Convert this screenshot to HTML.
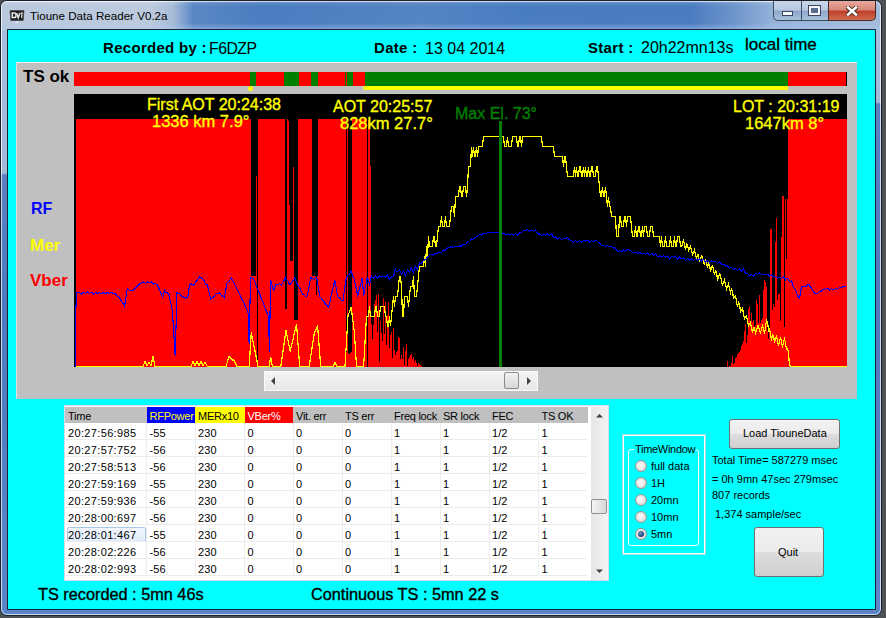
<!DOCTYPE html>
<html><head><meta charset="utf-8">
<style>
*{margin:0;padding:0;box-sizing:border-box}
html,body{width:886px;height:618px;overflow:hidden;background:#4e5254;font-family:"Liberation Sans",sans-serif}
.abs{position:absolute}
.t{position:absolute;white-space:nowrap;line-height:1}
.sb{-webkit-text-stroke:0.35px currentColor}
#win{position:absolute;left:0;top:0;width:882px;height:616px;border-radius:7px;background:#5a84c6;border:1px solid #1a2028;overflow:hidden}
#win .inl{position:absolute;left:0;top:0;right:0;bottom:0;border-radius:6px;border:1px solid rgba(255,255,255,.7)}
#tbar{position:absolute;left:0;top:0;width:880px;height:29px;background:linear-gradient(180deg,rgba(255,255,255,.18) 0,rgba(255,255,255,0) 5px,rgba(255,255,255,0) 22px,rgba(170,200,240,.45) 28px),linear-gradient(90deg,#b9c8dd 0%,#bccade 150px,#a8bcd8 172px,#5a88c6 192px,#4c7cc0 260px,#5584c4 420px,#4a7cc2 520px,#4b7bc0 690px,#6e96cc 735px,#98b4da 775px,#a4bcdc 880px)}
#fl{position:absolute;left:0;top:29px;width:8px;height:590px;background:linear-gradient(180deg,#a8bcdc 0,#a4b8d8 143px,#5a80c2 145px,#4f78c0 280px,#5a86c8 590px)}
#fr{position:absolute;left:874px;top:29px;width:8px;height:590px;background:linear-gradient(180deg,#a8bcdc 0,#a4b8d8 72px,#5a80c2 74px,#4f78c0 280px,#5a86c8 590px)}
#client{position:absolute;left:7px;top:29px;width:869px;height:581px;background:#00ffff;border:1px solid #1a2636}
.btns{position:absolute;top:0;height:20px;border:1px solid #39485c;border-top:none}
.hdr b{font-weight:bold}
.tbl td{}
</style></head><body>
<div id="win">
  <div id="fl"></div><div id="fr"></div>
  <div id="tbar"></div>
  <div class="inl"></div>
  <!-- caption buttons -->
  <div class="abs" style="left:772px;top:0;width:29px;height:20px;border:1px solid #3a4a60;border-top:none;border-radius:0 0 0 5px;background:linear-gradient(180deg,#c9d6e8 0%,#b7c8e0 45%,#8fa9cc 55%,#a9bfdc 100%)"></div>
  <div class="abs" style="left:800px;top:0;width:28px;height:20px;border:1px solid #3a4a60;border-top:none;background:linear-gradient(180deg,#c9d6e8 0%,#b7c8e0 45%,#8fa9cc 55%,#a9bfdc 100%)"></div>
  <div class="abs" style="left:827px;top:0;width:48px;height:20px;border:1px solid #4a2a28;border-top:none;border-radius:0 0 5px 0;background:linear-gradient(180deg,#e8a89c 0%,#d88a7a 45%,#c0402a 55%,#d06a50 100%)"></div>
  <!-- minimize glyph -->
  <div class="abs" style="left:781px;top:10px;width:11px;height:5px;background:#f4f6fa;border:1px solid #3a4660"></div>
  <!-- maximize glyph -->
  <div class="abs" style="left:808px;top:5px;width:11px;height:9px;border:2px solid #f4f6fa;outline:1px solid #3a4660;background:#5a6e92"></div>
  <!-- close glyph -->
  <svg class="abs" style="left:845px;top:5px" width="12" height="10" viewBox="0 0 12 10"><path d="M2 1.5 L10 8.5 M10 1.5 L2 8.5" stroke="#4a2a24" stroke-width="4.4" stroke-linecap="square"/><path d="M2 1.5 L10 8.5 M10 1.5 L2 8.5" stroke="#fff" stroke-width="2.6" stroke-linecap="square"/></svg>
  <!-- app icon -->
  <svg class="abs" style="left:8px;top:8px" width="16" height="16" viewBox="0 0 16 16"><path d="M1 1.5 L15 1.5 L14.2 11.5 L1.8 11.5 Z" fill="#1c1c1c" stroke="#3a3a3a" stroke-width="0.6"/><path d="M3.3 4 H5.6 Q7 4 7 6.2 Q7 8.6 5.6 8.6 H3.3 Z" fill="none" stroke="#e8e8e8" stroke-width="1.5"/><path d="M7.6 4 L9.2 8.8 L11 4" fill="none" stroke="#e0e8e0" stroke-width="1.5"/><path d="M11.8 4 L13 4 L12.6 9" fill="none" stroke="#d8d8d8" stroke-width="1.3"/><rect x="6.5" y="12.5" width="3" height="1.3" fill="#e8eef8"/></svg>
  <div class="t" style="left:29px;top:9px;font-size:11.6px;color:#000">Tioune Data Reader V0.2a</div>
</div>
<div id="client"></div>

<!-- header -->
<div class="t" style="left:103px;top:40px;font-size:15px;letter-spacing:0.3px;font-weight:bold;color:#000">Recorded by :</div>
<div class="t" style="left:209px;top:41px;font-size:15.8px;letter-spacing:-0.5px;color:#000">F6DZP</div>
<div class="t" style="left:374px;top:40px;font-size:15px;letter-spacing:0.3px;font-weight:bold;color:#000">Date :</div>
<div class="t" style="left:425px;top:41px;font-size:16px;color:#000">13 04 2014</div>
<div class="t" style="left:588px;top:40px;font-size:15px;letter-spacing:0.3px;font-weight:bold;color:#000">Start :</div>
<div class="t" style="left:641px;top:40px;font-size:16px;color:#000">20h22mn13s</div>
<div class="t sb" style="left:745px;top:36px;font-size:17px;color:#000">local time</div>

<!-- gray panel -->
<div class="abs" style="left:16px;top:62px;width:841px;height:337px;background:#c0c0c0;border-top:1px solid #f0f0f0;border-left:1px solid #e0e0e0"></div>
<div class="t" style="left:23px;top:68px;font-size:17px;font-weight:bold;color:#000">TS ok</div>

<!-- TS bar -->
<div class="abs" style="left:74px;top:72px;width:773px;height:14px;background:#f00;border-right:1px solid #000"></div>
<div class="abs" style="left:250px;top:72px;width:6px;height:14px;background:#008000"></div>
<div class="abs" style="left:284px;top:72px;width:15px;height:14px;background:#008000"></div>
<div class="abs" style="left:311px;top:72px;width:7px;height:14px;background:#008000"></div>
<div class="abs" style="left:345px;top:72px;width:1px;height:14px;background:#008000"></div>
<div class="abs" style="left:347px;top:72px;width:6px;height:14px;background:#008000"></div>
<div class="abs" style="left:365px;top:72px;width:423px;height:14px;background:#008000"></div>
<div class="abs" style="left:363px;top:86px;width:425px;height:4px;background:#ff0;border-radius:2px 0 0 2px"></div>
<div class="abs" style="left:248px;top:86px;width:5px;height:5px;background:#ff0;border-radius:50%"></div>

<svg class="abs" style="left:74px;top:94px" width="773" height="273" viewBox="74 94 773 273">
<rect x="74" y="94" width="773" height="273" fill="#000"/>
<path d="M76 119.0H251V367H76ZM251 276.0H256V367H251ZM256 176.0H257V367H256ZM258 119.0H285V367H258ZM285 309.0H287V367H285ZM287 119.0H288V367H287ZM288 121.0H289V367H288ZM289 205.0H290V367H289ZM290 261.0H293V367H290ZM293 167.0H294V367H293ZM294 320.0H298V367H294ZM298 119.0H312V367H298ZM312 276.0H316V367H312ZM316 295.0H317V367H316ZM317 276.0H318V367H317ZM318 119.0H346V367H318ZM346 352.0H347V367H346ZM347 125.0H348V367H347ZM348 353.0H349V367H348ZM349 354.0H350V367H349ZM350 353.0H351V367H350ZM351 352.0H352V367H351ZM352 119.0H367V367H352ZM368 120.0H370V367H368ZM370 166.0H371V367H370ZM371 324.2H372V367H371ZM372 338.6H373V367H372ZM373 325.4H374V367H373ZM374 303.6H375V367H374ZM375 300.3H376V367H375ZM376 295.4H377V367H376ZM377 331.8H378V367H377ZM378 294.2H379V367H378ZM379 361.6H380V367H379ZM380 320.5H381V367H380ZM381 332.6H382V367H381ZM382 340.8H383V367H382ZM383 297.6H384V367H383ZM384 334.2H385V367H384ZM385 302.0H386V367H385ZM386 344.5H387V367H386ZM387 315.2H388V367H387ZM388 302.2H389V367H388ZM389 348.1H390V367H389ZM390 335.0H391V367H390ZM391 331.7H392V367H391ZM392 358.3H393V367H392ZM393 328.0H394V367H393ZM394 350.0H395V367H394ZM395 354.8H396V367H395ZM396 352.3H397V367H396ZM397 350.6H398V367H397ZM398 336.9H399V367H398ZM399 338.0H400V367H399ZM400 359.0H401V367H400ZM401 355.2H402V367H401ZM402 359.3H403V367H402ZM403 346.6H404V367H403ZM404 364.5H405V367H404ZM405 351.0H406V367H405ZM406 344.2H407V367H406ZM407 365.7H408V367H407ZM408 359.2H409V367H408ZM409 357.4H410V367H409ZM410 354.8H411V367H410ZM411 353.7H412V367H411ZM412 358.6H413V367H412ZM413 356.5H414V367H413ZM414 362.0H415V367H414ZM415 359.7H416V367H415ZM416 363.0H417V367H416ZM417 366.1H418V367H417ZM418 362.6H419V367H418ZM419 364.3H420V367H419ZM420 365.3H421V367H420ZM421 366.4H422V367H421ZM727 361.3H728V367H727ZM729 365.5H730V367H729ZM730 365.7H731V367H730ZM731 363.0H732V367H731ZM732 356.3H733V367H732ZM733 363.7H734V367H733ZM734 363.3H735V367H734ZM735 358.0H736V367H735ZM736 357.0H737V367H736ZM737 354.4H738V367H737ZM738 353.1H739V367H738ZM739 351.5H740V367H739ZM740 350.2H741V367H740ZM741 345.8H742V367H741ZM742 343.5H743V367H742ZM743 341.1H744V367H743ZM744 331.2H745V367H744ZM745 324.4H746V367H745ZM746 342.6H747V367H746ZM747 334.5H748V367H747ZM748 308.6H749V367H748ZM749 305.6H750V367H749ZM750 324.7H751V367H750ZM751 312.7H752V367H751ZM752 322.3H753V367H752ZM753 319.9H754V367H753ZM754 329.2H755V367H754ZM755 325.0H756V367H755ZM756 299.8H757V367H756ZM757 304.1H758V367H757ZM758 322.6H759V367H758ZM759 294.9H760V367H759ZM760 322.8H761V367H760ZM761 319.9H762V367H761ZM762 318.1H763V367H762ZM763 290.4H764V367H763ZM764 280.3H765V367H764ZM765 282.2H766V367H765ZM766 287.2H767V367H766ZM767 331.0H768V367H767ZM768 339.3H769V367H768ZM769 328.3H770V367H769ZM770 229.0H772V367H770ZM772 309.9H773V367H772ZM773 304.3H774V367H773ZM774 306.8H775V367H774ZM775 241.5H776V367H775ZM776 218.0H777V367H776ZM777 300.3H778V367H777ZM778 294.0H780V367H778ZM780 321.1H781V367H780ZM781 237.3H782V367H781ZM782 196.0H784V367H782ZM784 326.7H785V367H784ZM785 199.0H786V367H785ZM786 259.0H787V367H786ZM787 199.0H788V367H787ZM788 119.0H847V367H788Z" fill="#f00" shape-rendering="crispEdges"/>
<polyline points="76.0,366.4 143.0,366.4 145.0,361.5 147.0,366.0 149.0,362.0 151.0,366.0 153.0,356.2 155.0,366.4 191.0,366.4 193.0,361.5 195.0,366.0 197.0,361.5 199.0,366.0 201.0,361.5 203.0,366.0 205.0,362.0 207.3,366.4 226.0,366.4 229.0,356.2 232.0,360.0 234.0,360.0 236.7,366.4 249.2,366.4 251.3,332.5 257.6,364.0 258.0,366.4 269.2,366.4 270.7,356.7 272.3,366.4 280.8,366.4 286.0,330.4 290.2,351.5 296.5,324.0 299.7,366.4 309.2,366.4 314.4,332.5 317.6,326.2 320.7,366.4 333.3,366.4 335.0,362.0 336.7,366.4 345.0,366.4 348.0,315.7 351.2,307.3 354.4,332.5 356.5,366.4 363.6,366.4 366.5,316.4 367.5,316.4 368.5,316.4 369.5,306.5 370.5,316.4 371.5,316.4 372.5,316.4 373.5,316.4 374.5,316.4 375.5,306.5 376.5,306.5 377.5,316.4 378.5,316.4 379.5,316.4 380.5,306.5 381.5,306.5 382.5,306.5 383.5,306.5 384.5,306.5 385.5,316.4 386.5,316.4 387.5,326.4 388.5,326.4 389.5,316.4 390.5,326.4 391.5,316.4 392.5,306.5 393.5,296.5 394.5,306.5 395.5,296.5 396.5,296.5 397.5,296.5 398.5,286.5 399.5,276.5 400.5,276.5 401.5,286.5 402.5,316.4 403.5,316.4 404.5,296.5 405.5,296.5 406.5,296.5 407.5,296.5 408.5,306.5 409.5,296.5 410.5,286.5 411.5,286.5 412.5,286.5 413.5,276.5 414.5,296.5 415.5,296.5 416.5,296.5 417.5,286.5 418.5,276.5 419.5,266.5 420.5,266.5 421.5,266.5 422.5,266.5 423.5,266.5 424.5,256.5 425.5,266.5 426.5,246.5 427.5,256.5 428.5,236.5 429.5,246.5 430.5,246.5 431.5,246.5 432.5,246.5 433.5,236.5 434.5,236.5 435.5,246.5 436.5,246.5 437.5,236.5 438.5,226.5 439.5,226.5 440.5,226.5 441.5,216.5 442.5,226.5 443.5,226.5 444.5,226.5 445.5,216.5 446.5,226.5 447.5,226.5 448.5,226.5 449.5,226.5 450.5,216.5 451.5,206.6 452.5,206.6 453.5,206.6 454.5,216.5 455.5,196.6 456.5,196.6 457.5,196.6 458.5,196.6 459.5,186.6 460.5,186.6 461.5,196.6 462.5,196.6 463.5,186.6 464.5,186.6 465.5,186.6 466.5,196.6 467.5,186.6 468.5,166.6 469.5,166.6 470.5,166.6 471.5,146.6 472.5,156.6 473.5,146.6 474.5,156.6 475.5,156.6 476.5,146.6 477.5,156.6 478.5,146.6 479.5,146.6 480.5,146.6 481.5,146.6 482.5,146.6 483.5,136.6 484.5,136.6 485.5,136.6 486.5,136.6 487.5,136.6 488.5,136.6 489.5,136.6 490.5,136.6 491.5,136.6 492.5,136.6 493.5,136.6 494.5,136.6 495.5,136.6 496.5,136.6 497.5,136.6 498.5,136.6 499.5,136.6 500.5,136.6 501.5,136.6 502.5,136.6 503.5,136.6 504.5,146.6 505.5,146.6 506.5,146.6 507.5,136.6 508.5,146.6 509.5,146.6 510.5,146.6 511.5,146.6 512.5,136.6 513.5,136.6 514.5,136.6 515.5,136.6 516.5,136.6 517.5,146.6 518.5,146.6 519.5,136.6 520.5,136.6 521.5,146.6 522.5,136.6 523.5,136.6 524.5,136.6 525.5,136.6 526.5,136.6 527.5,136.6 528.5,136.6 529.5,136.6 530.5,136.6 531.5,136.6 532.5,136.6 533.5,136.6 534.5,136.6 535.5,136.6 536.5,136.6 537.5,136.6 538.5,136.6 539.5,136.6 540.5,136.6 541.5,136.6 542.5,146.6 543.5,146.6 544.5,146.6 545.5,146.6 546.5,146.6 547.5,146.6 548.5,146.6 549.5,146.6 550.5,146.6 551.5,146.6 552.5,146.6 553.5,146.6 554.5,156.6 555.5,156.6 556.5,156.6 557.5,156.6 558.5,156.6 559.5,156.6 560.5,156.6 561.5,156.6 562.5,156.6 563.5,166.6 564.5,156.6 565.5,156.6 566.5,166.6 567.5,176.6 568.5,176.6 569.5,176.6 570.5,176.6 571.5,176.6 572.5,176.6 573.5,176.6 574.5,166.6 575.5,176.6 576.5,166.6 577.5,176.6 578.5,176.6 579.5,166.6 580.5,166.6 581.5,176.6 582.5,176.6 583.5,166.6 584.5,176.6 585.5,166.6 586.5,176.6 587.5,176.6 588.5,166.6 589.5,176.6 590.5,176.6 591.5,166.6 592.5,166.6 593.5,176.6 594.5,176.6 595.5,176.6 596.5,166.6 597.5,166.6 598.5,176.6 599.5,186.6 600.5,196.6 601.5,196.6 602.5,186.6 603.5,196.6 604.5,196.6 605.5,186.6 606.5,196.6 607.5,206.6 608.5,196.6 609.5,206.6 610.5,206.6 611.5,216.5 612.5,216.5 613.5,216.5 614.5,216.5 615.5,216.5 616.5,236.5 617.5,236.5 618.5,236.5 619.5,216.5 620.5,216.5 621.5,226.5 622.5,226.5 623.5,226.5 624.5,216.5 625.5,216.5 626.5,226.5 627.5,216.5 628.5,216.5 629.5,216.5 630.5,216.5 631.5,226.5 632.5,236.5 633.5,236.5 634.5,236.5 635.5,226.5 636.5,236.5 637.5,236.5 638.5,226.5 639.5,226.5 640.5,236.5 641.5,236.5 642.5,226.5 643.5,236.5 644.5,226.5 645.5,226.5 646.5,226.5 647.5,236.5 648.5,236.5 649.5,236.5 650.5,226.5 651.5,226.5 652.5,226.5 653.5,236.5 654.5,236.5 655.5,236.5 656.5,236.5 657.5,236.5 658.5,236.5 659.5,236.5 660.5,246.5 661.5,236.5 662.5,246.5 663.5,246.5 664.5,246.5 665.5,236.5 666.5,246.5 667.5,246.5 668.5,246.5 669.5,246.5 670.5,236.5 671.5,246.5 672.5,246.5 673.5,246.5 674.5,236.5 675.5,246.5 676.5,246.5 677.5,236.5 678.5,236.5 679.5,236.5 680.5,246.5 681.5,246.5 682.5,243.9 683.5,239.4 684.5,245.0 685.5,250.3 686.5,243.7 687.5,244.3 688.5,250.5 689.5,248.4 690.5,246.3 691.5,250.4 692.5,254.9 693.5,252.4 694.5,249.9 695.5,254.4 696.5,258.8 697.5,254.4 698.5,255.2 699.5,261.1 700.5,259.6 701.5,256.0 702.5,256.7 703.5,261.8 704.5,265.2 705.5,260.3 706.5,261.3 707.5,268.2 708.5,263.2 709.5,264.2 710.5,271.8 711.5,268.2 712.5,264.7 713.5,270.2 714.5,274.6 715.5,271.0 716.5,272.3 717.5,279.7 718.5,277.9 719.5,273.6 720.5,274.8 721.5,281.8 722.5,284.9 723.5,282.5 724.5,280.0 725.5,284.5 726.5,289.1 727.5,286.4 728.5,283.7 729.5,288.4 730.5,292.8 731.5,289.5 732.5,291.4 733.5,298.2 734.5,297.0 735.5,295.8 736.5,300.8 737.5,307.3 738.5,302.1 739.5,304.0 740.5,312.1 741.5,310.1 742.5,308.0 743.5,313.7 744.5,318.8 745.5,317.2 746.5,315.7 747.5,320.8 748.5,325.8 749.5,324.3 750.5,322.6 751.5,327.3 752.5,333.3 753.5,327.1 754.5,327.1 755.5,333.5 756.5,330.8 757.5,325.7 758.5,325.7 759.5,330.8 760.5,332.7 761.5,329.5 762.5,326.3 763.5,329.5 764.5,333.8 765.5,327.1 766.5,320.1 767.5,321.8 768.5,330.8 769.5,328.9 770.5,333.2 771.5,340.5 772.5,334.7 773.5,335.4 774.5,342.8 775.5,339.2 776.5,335.5 777.5,340.7 778.5,346.2 779.5,341.5 780.5,336.8 781.5,342.0 782.5,346.1 783.5,342.5 784.5,338.9 785.5,343.0 786.5,349.2 787.5,348.4 788.5,353.3 789.5,364.9 790.5,366.4 791.5,366.4 792.5,366.4 793.5,366.4 794.5,366.4 795.5,366.4 796.5,366.4 797.5,366.4 798.5,366.4 799.5,366.4 800.5,366.4 801.5,366.4 802.5,366.4 803.5,366.4 804.5,366.4 805.5,366.4 806.5,366.4 807.5,366.4 808.5,366.4 809.5,366.4 810.5,366.4 811.5,366.4 812.5,366.4 813.5,366.4 814.5,366.4 815.5,366.4 816.5,366.4 817.5,366.4 818.5,366.4 819.5,366.4 820.5,366.4 821.5,366.4 822.5,366.4 823.5,366.4 824.5,366.4 825.5,366.4 826.5,366.4 827.5,366.4 828.5,366.4 829.5,366.4 830.5,366.4 831.5,366.4 832.5,366.4 833.5,366.4 834.5,366.4 835.5,366.4 836.5,366.4 837.5,366.4 838.5,366.4 839.5,366.4 840.5,366.4 841.5,366.4 842.5,366.4 843.5,366.4 844.5,366.4 845.5,366.4 846.5,366.4" fill="none" stroke="#ff0" stroke-width="1.2" stroke-linejoin="miter" shape-rendering="crispEdges"/>
<polyline points="75.5,367.0 75.5,313.0 77.0,292.5 77.0,292.5 77.5,292.7 79.5,292.5 81.5,294.0 83.5,292.2 85.5,293.4 87.5,292.1 89.5,293.4 91.5,292.2 93.5,294.0 95.5,292.8 97.5,293.3 99.5,292.8 100.0,293.0 101.5,293.3 103.5,292.6 105.5,293.4 107.5,292.7 109.5,293.2 111.5,292.4 113.5,293.5 114.0,293.0 115.5,294.0 117.5,296.9 119.5,297.2 120.0,298.3 121.5,301.6 123.5,303.9 124.5,306.3 125.5,300.5 127.1,289.4 127.5,289.1 129.5,290.5 131.5,290.1 132.5,290.3 133.5,290.1 135.5,287.9 136.0,287.6 137.5,286.3 139.5,284.1 141.5,283.2 142.3,282.3 143.5,282.0 145.5,283.3 147.5,281.9 149.5,282.8 151.2,282.3 151.5,282.1 153.5,284.0 155.5,283.6 157.4,284.9 157.5,285.3 159.5,289.5 161.5,294.9 162.7,297.4 163.5,294.1 164.5,290.3 165.5,292.4 167.5,292.9 169.0,294.7 169.5,297.9 171.5,306.2 172.5,311.6 173.5,329.4 175.2,356.2 175.5,345.2 177.0,292.0 177.5,293.2 179.5,293.5 181.5,296.1 183.5,296.5 184.1,297.4 185.5,298.0 187.5,297.0 187.7,297.4 189.5,285.0 191.5,284.0 193.5,285.0 194.8,283.2 195.5,281.7 197.5,280.4 198.4,277.8 199.5,277.1 201.5,278.2 202.0,277.8 203.5,279.4 205.5,283.9 207.3,285.0 207.5,285.2 209.5,294.1 210.8,299.2 211.5,298.4 213.5,297.1 215.5,294.4 216.2,293.8 217.5,293.8 219.5,293.0 219.7,293.0 221.5,295.7 223.5,296.2 224.2,297.4 225.5,291.8 226.9,283.2 227.5,282.4 229.5,281.0 231.3,277.8 231.5,277.7 233.5,282.4 235.5,285.6 237.5,290.3 239.5,293.6 241.5,298.5 243.5,301.5 244.7,304.5 245.5,307.1 247.5,311.3 248.2,313.4 249.1,343.7 249.5,326.3 250.5,278.0 251.5,277.7 253.5,279.2 253.7,279.0 255.5,283.2 257.5,289.2 259.5,293.3 261.5,298.8 263.5,303.3 265.5,309.6 267.5,313.5 268.4,315.8 269.5,351.6 270.5,280.0 271.5,282.9 273.5,290.5 273.7,290.5 275.5,285.1 275.8,284.2 277.5,284.7 279.5,283.8 281.5,284.9 282.0,284.2 283.5,281.3 285.3,278.0 285.5,279.6 287.5,280.1 289.5,284.4 290.5,284.2 291.5,282.7 293.5,280.1 294.7,278.0 295.5,279.6 297.5,284.7 299.5,287.5 301.5,291.9 303.0,294.7 303.5,294.5 305.5,296.6 307.4,295.8 307.5,294.7 309.5,284.1 310.5,278.0 311.5,277.9 313.5,279.3 315.5,277.6 316.8,278.0 317.5,283.1 319.5,293.8 320.0,296.8 321.5,298.8 323.5,300.7 325.5,304.3 327.5,306.2 328.4,307.4 329.5,303.9 331.5,293.5 333.5,286.3 334.7,280.0 335.5,284.1 337.5,295.9 337.9,296.8 339.5,297.9 341.5,300.5 343.0,300.3 343.5,296.5 345.5,283.6 346.3,277.6 347.5,275.4 349.5,274.2 350.9,270.8 351.5,272.2 353.5,277.9 354.3,279.9 355.5,285.1 357.5,295.2 357.7,295.8 359.5,288.4 361.5,281.2 362.2,277.6 363.5,294.2 363.6,295.6 365.5,286.9 367.1,277.8 367.5,277.8 369.5,284.1 369.8,283.2 371.5,275.4 371.6,277.0 373.5,278.4 375.5,275.7 377.5,277.9 379.5,276.1 381.5,277.1 383.5,276.4 385.5,277.1 387.5,275.2 389.5,279.8 391.5,276.5 392.0,277.0 393.5,276.7 395.5,268.5 395.6,270.7 397.5,271.7 399.5,269.6 401.5,274.3 402.8,272.5 403.5,271.0 405.5,275.6 407.5,269.6 409.5,272.3 411.5,267.3 411.7,268.9 413.5,272.9 415.5,266.1 417.5,270.1 418.8,265.3 419.5,262.9 421.5,263.6 422.4,261.8 423.5,260.5 425.5,259.5 427.5,257.2 429.5,255.6 430.0,255.0 431.5,254.5 433.5,255.0 435.5,253.2 437.5,253.0 439.5,252.1 441.5,252.7 442.6,251.2 443.5,250.0 445.5,250.2 447.5,247.7 448.9,247.0 449.5,247.3 451.5,246.6 453.5,247.3 455.5,246.4 457.5,246.9 459.5,246.0 461.5,246.0 463.5,244.1 465.5,244.9 467.5,242.0 469.5,241.5 471.5,239.2 472.0,239.6 473.5,239.1 475.5,237.2 477.5,236.2 479.5,234.7 480.5,234.4 481.5,234.9 483.5,233.4 485.5,233.7 487.5,232.6 488.9,232.7 489.5,232.7 491.5,232.5 493.5,232.8 495.5,232.4 497.5,232.8 499.5,232.7 501.5,232.7 503.5,233.3 505.5,234.6 505.7,234.4 507.5,233.9 509.5,235.0 511.5,233.7 513.5,235.1 515.5,233.6 517.5,235.3 518.3,234.0 519.5,233.0 521.5,232.6 523.5,230.2 524.7,230.2 525.5,230.4 527.5,229.7 529.5,231.1 531.5,230.2 533.5,231.4 535.2,230.2 535.5,229.9 537.5,233.4 539.4,234.4 539.5,233.9 541.5,235.5 543.5,234.3 545.5,235.1 547.5,234.0 549.5,235.6 551.5,233.8 552.0,234.4 553.5,237.6 554.1,237.2 555.5,237.0 557.5,239.1 559.5,237.7 561.5,239.5 563.4,238.9 563.5,238.7 565.5,238.4 567.5,237.7 567.6,237.8 569.5,239.8 571.5,240.7 571.8,241.0 573.5,242.2 575.5,240.6 577.5,241.9 579.5,240.6 581.5,242.0 583.5,240.7 585.5,241.0 587.5,240.4 589.5,242.0 591.5,240.6 593.5,241.7 595.5,240.5 597.0,241.0 597.5,241.6 599.5,242.9 601.3,245.2 601.5,245.6 603.5,245.5 605.5,246.3 607.5,245.7 609.5,246.9 611.5,246.4 613.5,248.6 613.9,247.3 615.5,248.6 617.5,251.4 618.1,251.5 619.5,250.9 621.5,251.8 623.5,249.9 625.5,250.9 627.5,249.2 628.6,249.4 629.5,250.2 631.5,251.4 632.8,252.5 633.5,252.9 635.5,252.2 637.5,253.4 639.5,252.7 641.5,253.3 643.5,253.4 645.5,254.2 647.5,253.1 649.5,255.5 651.5,253.4 653.5,255.0 655.5,254.0 656.0,254.6 657.5,256.4 659.5,255.8 660.2,256.7 661.5,257.0 663.5,255.7 665.5,257.1 667.5,255.6 669.5,258.8 671.5,256.7 672.8,256.7 673.5,257.8 675.5,256.2 677.5,259.5 679.5,257.2 680.0,257.8 681.5,258.6 683.5,258.0 685.5,260.6 687.5,258.6 688.4,258.9 689.5,260.3 691.5,259.0 693.5,260.5 695.5,258.5 697.5,260.0 699.5,259.0 701.5,261.2 703.5,259.3 705.5,262.0 707.5,260.4 709.5,262.8 711.5,260.5 711.6,261.0 713.5,261.4 715.5,261.7 717.5,263.2 719.5,262.0 720.0,262.6 721.5,264.0 723.5,264.2 725.5,266.1 725.8,265.5 727.5,265.7 729.5,268.5 731.5,267.2 733.5,269.5 735.5,268.4 737.5,270.5 739.5,268.8 741.5,271.2 743.3,269.4 743.5,268.8 745.5,273.6 747.5,273.3 749.1,275.2 749.5,275.9 751.5,274.3 753.5,276.5 755.5,273.3 757.5,274.3 758.8,273.3 759.5,273.0 761.5,274.4 763.5,274.2 765.5,274.8 767.5,274.1 768.5,275.2 769.5,276.0 771.5,274.8 773.5,276.8 775.5,276.4 777.5,278.2 778.2,277.2 779.5,277.1 781.5,278.4 783.5,276.8 785.5,280.0 786.0,278.1 787.5,278.2 789.5,281.8 791.5,280.8 791.8,282.0 793.5,287.7 795.5,289.3 797.5,295.8 799.5,298.5 801.5,286.9 803.5,286.4 805.5,286.9 807.5,285.0 809.3,284.9 809.5,286.3 811.5,287.8 813.5,291.7 815.0,293.6 815.5,293.3 817.5,293.7 819.5,291.3 821.5,291.1 823.5,289.2 824.8,288.8 825.5,289.2 827.5,288.3 829.5,290.2 831.5,288.6 833.5,289.7 835.5,288.6 836.4,288.8 837.5,289.3 839.5,287.6 841.5,287.5 843.5,286.6 845.5,286.4 846.1,285.9" fill="none" stroke="#00f" stroke-width="1.1" shape-rendering="crispEdges"/>
<rect x="499" y="121" width="3" height="246" fill="#008000" shape-rendering="crispEdges"/>
</svg>

<!-- chart labels -->
<div class="t sb" style="left:147px;top:97px;font-size:16px;color:#ff0">First AOT 20:24:38</div>
<div class="t sb" style="left:152px;top:113px;font-size:16.5px;color:#ff0">1336 km 7.9°</div>
<div class="t sb" style="left:333px;top:99px;font-size:16px;color:#ff0">AOT 20:25:57</div>
<div class="t sb" style="left:340px;top:115px;font-size:16.5px;color:#ff0">828km 27.7°</div>
<div class="t sb" style="left:455px;top:106px;font-size:16px;color:#008000">Max El. 73°</div>
<div class="t sb" style="left:733px;top:99px;font-size:16px;color:#ff0">LOT : 20:31:19</div>
<div class="t sb" style="left:745px;top:115px;font-size:16.5px;color:#ff0">1647km 8°</div>

<div class="t" style="left:31px;top:201px;font-size:16px;font-weight:bold;color:#00f">RF</div>
<div class="t" style="left:30px;top:237px;font-size:17px;font-weight:bold;color:#ff0">Mer</div>
<div class="t" style="left:30px;top:272px;font-size:17px;font-weight:bold;color:#f00">Vber</div>

<!-- h scrollbar -->
<div class="abs" style="left:264px;top:371px;width:274px;height:20px;background:linear-gradient(180deg,#f4f4f4,#e8e8e8);border:1px solid #fafafa"></div>
<svg class="abs" style="left:268px;top:376px" width="10" height="10"><path d="M7 1 L3 5 L7 9 Z" fill="#444"/></svg>
<svg class="abs" style="left:524px;top:376px" width="10" height="10"><path d="M3 1 L7 5 L3 9 Z" fill="#444"/></svg>
<div class="abs" style="left:504px;top:372px;width:15px;height:17px;background:linear-gradient(180deg,#f2f2f2,#d6d6d6);border:1px solid #8c8c8c;border-radius:2px"></div>

<!-- table -->
<div class="abs" style="left:64px;top:405px;width:545px;height:176px;background:#fff;border:1px solid #dcdce4"></div>
<div class="abs" style="left:65px;top:407px;width:522.5px;height:16px;background:#c0c0c0"></div>
<div class="abs" style="left:67px;top:527px;width:79px;height:15px;border:1px solid #a8c8e8;border-radius:2px;background:linear-gradient(180deg,rgba(240,246,252,1),rgba(225,236,250,1))"></div>
<div class="t" style="left:68px;top:411px;font-size:11px;letter-spacing:-0.25px;color:#000">Time</div>
<div class="abs" style="left:146.5px;top:407px;width:48.5px;height:16px;background:#0000ff"></div>
<div class="t" style="left:149.5px;top:411px;font-size:11px;letter-spacing:-0.25px;color:#ff0">RFPower</div>
<div class="abs" style="left:146.0px;top:423px;width:1px;height:153px;background:#ececec"></div>
<div class="abs" style="left:195px;top:407px;width:49.5px;height:16px;background:#ffff00"></div>
<div class="t" style="left:198px;top:411px;font-size:11px;letter-spacing:-0.25px;color:#000">MERx10</div>
<div class="abs" style="left:194.5px;top:423px;width:1px;height:153px;background:#ececec"></div>
<div class="abs" style="left:244.5px;top:407px;width:48.5px;height:16px;background:#ff0000"></div>
<div class="t" style="left:247.5px;top:411px;font-size:11px;letter-spacing:-0.25px;color:#fff">VBer%</div>
<div class="abs" style="left:244.0px;top:423px;width:1px;height:153px;background:#ececec"></div>
<div class="t" style="left:296px;top:411px;font-size:11px;letter-spacing:-0.25px;color:#000">Vit. err</div>
<div class="abs" style="left:292.5px;top:423px;width:1px;height:153px;background:#ececec"></div>
<div class="t" style="left:345px;top:411px;font-size:11px;letter-spacing:-0.25px;color:#000">TS err</div>
<div class="abs" style="left:341.5px;top:423px;width:1px;height:153px;background:#ececec"></div>
<div class="t" style="left:394px;top:411px;font-size:11px;letter-spacing:-0.25px;color:#000">Freq lock</div>
<div class="abs" style="left:390.5px;top:423px;width:1px;height:153px;background:#ececec"></div>
<div class="t" style="left:443px;top:411px;font-size:11px;letter-spacing:-0.25px;color:#000">SR lock</div>
<div class="abs" style="left:439.5px;top:423px;width:1px;height:153px;background:#ececec"></div>
<div class="t" style="left:492px;top:411px;font-size:11px;letter-spacing:-0.25px;color:#000">FEC</div>
<div class="abs" style="left:488.5px;top:423px;width:1px;height:153px;background:#ececec"></div>
<div class="t" style="left:541.5px;top:411px;font-size:11px;letter-spacing:-0.25px;color:#000">TS OK</div>
<div class="abs" style="left:538.0px;top:423px;width:1px;height:153px;background:#ececec"></div>
<div class="abs" style="left:65px;top:439px;width:522px;height:1px;background:#ececec"></div>
<div class="t" style="left:68px;top:428px;font-size:11px;letter-spacing:0.35px;color:#000">20:27:56:985</div>
<div class="t" style="left:149.5px;top:428px;font-size:11px;letter-spacing:0.1px;color:#000">-55</div>
<div class="t" style="left:198px;top:428px;font-size:11px;letter-spacing:0.1px;color:#000">230</div>
<div class="t" style="left:247.5px;top:428px;font-size:11px;letter-spacing:0.1px;color:#000">0</div>
<div class="t" style="left:296px;top:428px;font-size:11px;letter-spacing:0.1px;color:#000">0</div>
<div class="t" style="left:345px;top:428px;font-size:11px;letter-spacing:0.1px;color:#000">0</div>
<div class="t" style="left:394px;top:428px;font-size:11px;letter-spacing:0.1px;color:#000">1</div>
<div class="t" style="left:443px;top:428px;font-size:11px;letter-spacing:0.1px;color:#000">1</div>
<div class="t" style="left:492px;top:428px;font-size:11px;letter-spacing:0.1px;color:#000">1/2</div>
<div class="t" style="left:541.5px;top:428px;font-size:11px;letter-spacing:0.1px;color:#000">1</div>
<div class="abs" style="left:65px;top:456px;width:522px;height:1px;background:#ececec"></div>
<div class="t" style="left:68px;top:445px;font-size:11px;letter-spacing:0.35px;color:#000">20:27:57:752</div>
<div class="t" style="left:149.5px;top:445px;font-size:11px;letter-spacing:0.1px;color:#000">-56</div>
<div class="t" style="left:198px;top:445px;font-size:11px;letter-spacing:0.1px;color:#000">230</div>
<div class="t" style="left:247.5px;top:445px;font-size:11px;letter-spacing:0.1px;color:#000">0</div>
<div class="t" style="left:296px;top:445px;font-size:11px;letter-spacing:0.1px;color:#000">0</div>
<div class="t" style="left:345px;top:445px;font-size:11px;letter-spacing:0.1px;color:#000">0</div>
<div class="t" style="left:394px;top:445px;font-size:11px;letter-spacing:0.1px;color:#000">1</div>
<div class="t" style="left:443px;top:445px;font-size:11px;letter-spacing:0.1px;color:#000">1</div>
<div class="t" style="left:492px;top:445px;font-size:11px;letter-spacing:0.1px;color:#000">1/2</div>
<div class="t" style="left:541.5px;top:445px;font-size:11px;letter-spacing:0.1px;color:#000">1</div>
<div class="abs" style="left:65px;top:473px;width:522px;height:1px;background:#ececec"></div>
<div class="t" style="left:68px;top:462px;font-size:11px;letter-spacing:0.35px;color:#000">20:27:58:513</div>
<div class="t" style="left:149.5px;top:462px;font-size:11px;letter-spacing:0.1px;color:#000">-56</div>
<div class="t" style="left:198px;top:462px;font-size:11px;letter-spacing:0.1px;color:#000">230</div>
<div class="t" style="left:247.5px;top:462px;font-size:11px;letter-spacing:0.1px;color:#000">0</div>
<div class="t" style="left:296px;top:462px;font-size:11px;letter-spacing:0.1px;color:#000">0</div>
<div class="t" style="left:345px;top:462px;font-size:11px;letter-spacing:0.1px;color:#000">0</div>
<div class="t" style="left:394px;top:462px;font-size:11px;letter-spacing:0.1px;color:#000">1</div>
<div class="t" style="left:443px;top:462px;font-size:11px;letter-spacing:0.1px;color:#000">1</div>
<div class="t" style="left:492px;top:462px;font-size:11px;letter-spacing:0.1px;color:#000">1/2</div>
<div class="t" style="left:541.5px;top:462px;font-size:11px;letter-spacing:0.1px;color:#000">1</div>
<div class="abs" style="left:65px;top:490px;width:522px;height:1px;background:#ececec"></div>
<div class="t" style="left:68px;top:479px;font-size:11px;letter-spacing:0.35px;color:#000">20:27:59:169</div>
<div class="t" style="left:149.5px;top:479px;font-size:11px;letter-spacing:0.1px;color:#000">-55</div>
<div class="t" style="left:198px;top:479px;font-size:11px;letter-spacing:0.1px;color:#000">230</div>
<div class="t" style="left:247.5px;top:479px;font-size:11px;letter-spacing:0.1px;color:#000">0</div>
<div class="t" style="left:296px;top:479px;font-size:11px;letter-spacing:0.1px;color:#000">0</div>
<div class="t" style="left:345px;top:479px;font-size:11px;letter-spacing:0.1px;color:#000">0</div>
<div class="t" style="left:394px;top:479px;font-size:11px;letter-spacing:0.1px;color:#000">1</div>
<div class="t" style="left:443px;top:479px;font-size:11px;letter-spacing:0.1px;color:#000">1</div>
<div class="t" style="left:492px;top:479px;font-size:11px;letter-spacing:0.1px;color:#000">1/2</div>
<div class="t" style="left:541.5px;top:479px;font-size:11px;letter-spacing:0.1px;color:#000">1</div>
<div class="abs" style="left:65px;top:507px;width:522px;height:1px;background:#ececec"></div>
<div class="t" style="left:68px;top:496px;font-size:11px;letter-spacing:0.35px;color:#000">20:27:59:936</div>
<div class="t" style="left:149.5px;top:496px;font-size:11px;letter-spacing:0.1px;color:#000">-56</div>
<div class="t" style="left:198px;top:496px;font-size:11px;letter-spacing:0.1px;color:#000">230</div>
<div class="t" style="left:247.5px;top:496px;font-size:11px;letter-spacing:0.1px;color:#000">0</div>
<div class="t" style="left:296px;top:496px;font-size:11px;letter-spacing:0.1px;color:#000">0</div>
<div class="t" style="left:345px;top:496px;font-size:11px;letter-spacing:0.1px;color:#000">0</div>
<div class="t" style="left:394px;top:496px;font-size:11px;letter-spacing:0.1px;color:#000">1</div>
<div class="t" style="left:443px;top:496px;font-size:11px;letter-spacing:0.1px;color:#000">1</div>
<div class="t" style="left:492px;top:496px;font-size:11px;letter-spacing:0.1px;color:#000">1/2</div>
<div class="t" style="left:541.5px;top:496px;font-size:11px;letter-spacing:0.1px;color:#000">1</div>
<div class="abs" style="left:65px;top:524px;width:522px;height:1px;background:#ececec"></div>
<div class="t" style="left:68px;top:513px;font-size:11px;letter-spacing:0.35px;color:#000">20:28:00:697</div>
<div class="t" style="left:149.5px;top:513px;font-size:11px;letter-spacing:0.1px;color:#000">-56</div>
<div class="t" style="left:198px;top:513px;font-size:11px;letter-spacing:0.1px;color:#000">230</div>
<div class="t" style="left:247.5px;top:513px;font-size:11px;letter-spacing:0.1px;color:#000">0</div>
<div class="t" style="left:296px;top:513px;font-size:11px;letter-spacing:0.1px;color:#000">0</div>
<div class="t" style="left:345px;top:513px;font-size:11px;letter-spacing:0.1px;color:#000">0</div>
<div class="t" style="left:394px;top:513px;font-size:11px;letter-spacing:0.1px;color:#000">1</div>
<div class="t" style="left:443px;top:513px;font-size:11px;letter-spacing:0.1px;color:#000">1</div>
<div class="t" style="left:492px;top:513px;font-size:11px;letter-spacing:0.1px;color:#000">1/2</div>
<div class="t" style="left:541.5px;top:513px;font-size:11px;letter-spacing:0.1px;color:#000">1</div>
<div class="abs" style="left:65px;top:541px;width:522px;height:1px;background:#ececec"></div>
<div class="t" style="left:68px;top:530px;font-size:11px;letter-spacing:0.35px;color:#000">20:28:01:467</div>
<div class="t" style="left:149.5px;top:530px;font-size:11px;letter-spacing:0.1px;color:#000">-55</div>
<div class="t" style="left:198px;top:530px;font-size:11px;letter-spacing:0.1px;color:#000">230</div>
<div class="t" style="left:247.5px;top:530px;font-size:11px;letter-spacing:0.1px;color:#000">0</div>
<div class="t" style="left:296px;top:530px;font-size:11px;letter-spacing:0.1px;color:#000">0</div>
<div class="t" style="left:345px;top:530px;font-size:11px;letter-spacing:0.1px;color:#000">0</div>
<div class="t" style="left:394px;top:530px;font-size:11px;letter-spacing:0.1px;color:#000">1</div>
<div class="t" style="left:443px;top:530px;font-size:11px;letter-spacing:0.1px;color:#000">1</div>
<div class="t" style="left:492px;top:530px;font-size:11px;letter-spacing:0.1px;color:#000">1/2</div>
<div class="t" style="left:541.5px;top:530px;font-size:11px;letter-spacing:0.1px;color:#000">1</div>
<div class="abs" style="left:65px;top:558px;width:522px;height:1px;background:#ececec"></div>
<div class="t" style="left:68px;top:547px;font-size:11px;letter-spacing:0.35px;color:#000">20:28:02:226</div>
<div class="t" style="left:149.5px;top:547px;font-size:11px;letter-spacing:0.1px;color:#000">-56</div>
<div class="t" style="left:198px;top:547px;font-size:11px;letter-spacing:0.1px;color:#000">230</div>
<div class="t" style="left:247.5px;top:547px;font-size:11px;letter-spacing:0.1px;color:#000">0</div>
<div class="t" style="left:296px;top:547px;font-size:11px;letter-spacing:0.1px;color:#000">0</div>
<div class="t" style="left:345px;top:547px;font-size:11px;letter-spacing:0.1px;color:#000">0</div>
<div class="t" style="left:394px;top:547px;font-size:11px;letter-spacing:0.1px;color:#000">1</div>
<div class="t" style="left:443px;top:547px;font-size:11px;letter-spacing:0.1px;color:#000">1</div>
<div class="t" style="left:492px;top:547px;font-size:11px;letter-spacing:0.1px;color:#000">1/2</div>
<div class="t" style="left:541.5px;top:547px;font-size:11px;letter-spacing:0.1px;color:#000">1</div>
<div class="abs" style="left:65px;top:575px;width:522px;height:1px;background:#ececec"></div>
<div class="t" style="left:68px;top:564px;font-size:11px;letter-spacing:0.35px;color:#000">20:28:02:993</div>
<div class="t" style="left:149.5px;top:564px;font-size:11px;letter-spacing:0.1px;color:#000">-56</div>
<div class="t" style="left:198px;top:564px;font-size:11px;letter-spacing:0.1px;color:#000">230</div>
<div class="t" style="left:247.5px;top:564px;font-size:11px;letter-spacing:0.1px;color:#000">0</div>
<div class="t" style="left:296px;top:564px;font-size:11px;letter-spacing:0.1px;color:#000">0</div>
<div class="t" style="left:345px;top:564px;font-size:11px;letter-spacing:0.1px;color:#000">0</div>
<div class="t" style="left:394px;top:564px;font-size:11px;letter-spacing:0.1px;color:#000">1</div>
<div class="t" style="left:443px;top:564px;font-size:11px;letter-spacing:0.1px;color:#000">1</div>
<div class="t" style="left:492px;top:564px;font-size:11px;letter-spacing:0.1px;color:#000">1/2</div>
<div class="t" style="left:541.5px;top:564px;font-size:11px;letter-spacing:0.1px;color:#000">1</div>
<div class="abs" style="left:591px;top:407px;width:17px;height:173px;background:linear-gradient(90deg,#e6e6e6,#f2f2f2)"></div>
<svg class="abs" style="left:595px;top:412px" width="9" height="7"><path d="M1 5.5 L4.5 2 L8 5.5 Z" fill="#404040"/></svg>
<svg class="abs" style="left:595px;top:568px" width="9" height="7"><path d="M1 1.5 L4.5 5 L8 1.5 Z" fill="#404040"/></svg>
<div class="abs" style="left:591px;top:499px;width:16px;height:15px;background:linear-gradient(90deg,#f4f4f4,#d8d8d8);border:1px solid #909090;border-radius:2px"></div>

<!-- time window -->
<div class="abs" style="left:622px;top:434px;width:84px;height:121px;border:1px solid #a8d8d8;box-shadow:inset 0 0 0 1px #fff"></div>
<div class="abs" style="left:628px;top:449px;width:71px;height:97px;border:1px solid #fff;border-radius:3px"></div>
<div class="t" style="left:634px;top:444px;font-size:11px;letter-spacing:-0.3px;color:#000;background:#0ff;padding:0 1px">TimeWindow</div>
<div class="abs" style="left:635px;top:460px;width:12px;height:12px;border-radius:50%;border:1px solid #979797;background:radial-gradient(circle at 45% 45%,#f6f6f6 20%,#dcdcdc 70%,#c8c8c8)"></div>
<div class="t" style="left:651px;top:461px;font-size:11px;color:#000">full data</div>
<div class="abs" style="left:635px;top:477px;width:12px;height:12px;border-radius:50%;border:1px solid #979797;background:radial-gradient(circle at 45% 45%,#f6f6f6 20%,#dcdcdc 70%,#c8c8c8)"></div>
<div class="t" style="left:651px;top:478px;font-size:11px;color:#000">1H</div>
<div class="abs" style="left:635px;top:494px;width:12px;height:12px;border-radius:50%;border:1px solid #979797;background:radial-gradient(circle at 45% 45%,#f6f6f6 20%,#dcdcdc 70%,#c8c8c8)"></div>
<div class="t" style="left:651px;top:495px;font-size:11px;color:#000">20mn</div>
<div class="abs" style="left:635px;top:511px;width:12px;height:12px;border-radius:50%;border:1px solid #979797;background:radial-gradient(circle at 45% 45%,#f6f6f6 20%,#dcdcdc 70%,#c8c8c8)"></div>
<div class="t" style="left:651px;top:512px;font-size:11px;color:#000">10mn</div>
<div class="abs" style="left:635px;top:528px;width:12px;height:12px;border-radius:50%;border:1px solid #979797;background:radial-gradient(circle at 45% 45%,#f6f6f6 20%,#dcdcdc 70%,#c8c8c8)"></div>
<div class="abs" style="left:638px;top:531px;width:6px;height:6px;border-radius:50%;background:radial-gradient(circle at 40% 35%,#6a9ad0,#163a66 70%)"></div>
<div class="t" style="left:651px;top:529px;font-size:11px;color:#000">5mn</div>

<!-- buttons -->
<div class="abs" style="left:729px;top:419px;width:111px;height:30px;border:1px solid #707070;border-radius:3px;background:linear-gradient(180deg,#f2f2f2 0%,#ebebeb 50%,#dddddd 51%,#cfcfcf 100%)"></div>
<div class="t" style="left:743px;top:428px;font-size:11px;color:#000">Load TiouneData</div>
<div class="t" style="left:712px;top:455px;font-size:11px;color:#000">Total Time= 587279 msec</div>
<div class="t" style="left:712px;top:474px;font-size:11px;color:#000">= 0h 9mn 47sec 279msec</div>
<div class="t" style="left:712px;top:490px;font-size:11px;color:#000">807 records</div>
<div class="t" style="left:715px;top:509px;font-size:11px;color:#000">1,374 sample/sec</div>
<div class="abs" style="left:754px;top:527px;width:70px;height:50px;border:1px solid #707070;border-radius:3px;background:linear-gradient(180deg,#f2f2f2 0%,#ebebeb 50%,#dddddd 51%,#cfcfcf 100%)"></div>
<div class="t" style="left:778px;top:547px;font-size:11px;color:#000">Quit</div>

<!-- bottom -->
<div class="t sb" style="left:38px;top:586px;font-size:16.3px;color:#000">TS recorded : 5mn 46s</div>
<div class="t sb" style="left:311px;top:586px;font-size:16.3px;color:#000">Continuous TS : 5mn 22 s</div>
</body></html>
